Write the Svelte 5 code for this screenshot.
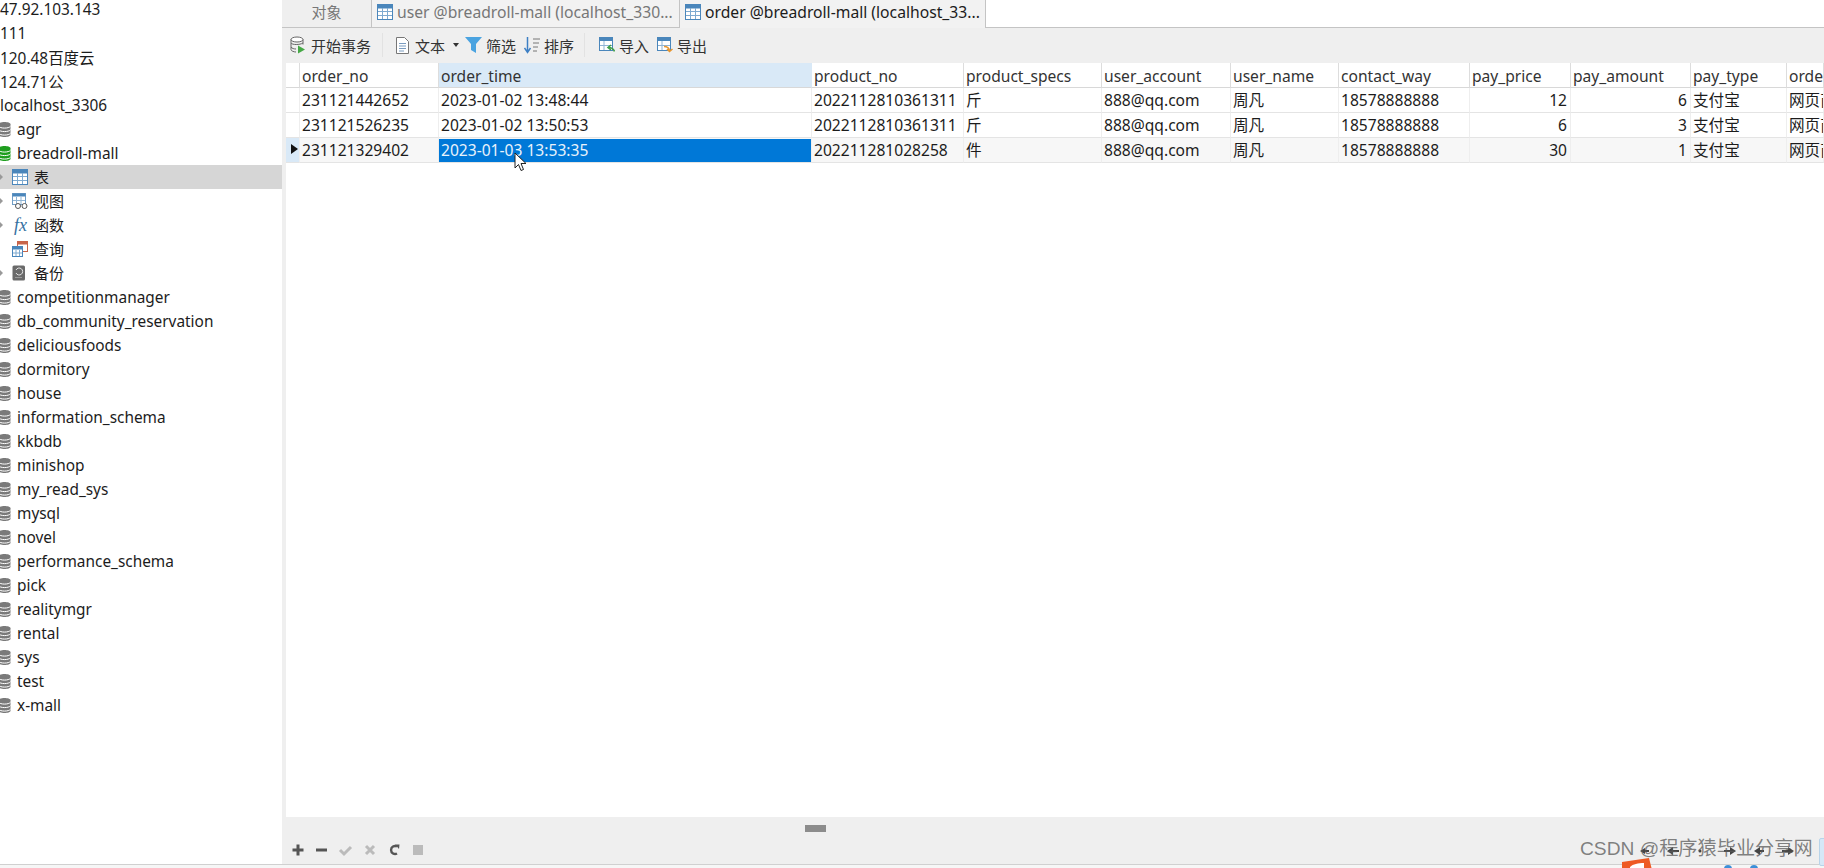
<script lang="ts">
	const connections = ['47.92.103.143', '111', '120.48百度云', '124.71公', 'localhost_3306'];
	const dbsBefore = [{ name: 'agr', open: false }, { name: 'breadroll-mall', open: true }];
	const objects = [
		{ name: '表', icon: 'table', arrow: true, active: true },
		{ name: '视图', icon: 'view', arrow: true, active: false },
		{ name: '函数', icon: 'fx', arrow: true, active: false },
		{ name: '查询', icon: 'query', arrow: false, active: false },
		{ name: '备份', icon: 'backup', arrow: true, active: false }
	];
	const dbsAfter = [
		'competitionmanager', 'db_community_reservation', 'deliciousfoods', 'dormitory', 'house',
		'information_schema', 'kkbdb', 'minishop', 'my_read_sys', 'mysql', 'novel',
		'performance_schema', 'pick', 'realitymgr', 'rental', 'sys', 'test', 'x-mall'
	];

	const columns = ['order_no', 'order_time', 'product_no', 'product_specs', 'user_account', 'user_name', 'contact_way', 'pay_price', 'pay_amount', 'pay_type', 'order_from'];
	const rows = [
		['231121442652', '2023-01-02 13:48:44', '2022112810361311', '斤', '888@qq.com', '周凡', '18578888888', '12', '6', '支付宝', '网页商城'],
		['231121526235', '2023-01-02 13:50:53', '2022112810361311', '斤', '888@qq.com', '周凡', '18578888888', '6', '3', '支付宝', '网页商城'],
		['231121329402', '2023-01-03 13:53:35', '202211281028258', '件', '888@qq.com', '周凡', '18578888888', '30', '1', '支付宝', '网页商城']
	];
	const numeric = [7, 8];
</script>

{#snippet tableIcon()}
	<svg class="ico" width="16" height="16" viewBox="0 0 16 16">
		<rect x="0.5" y="0.5" width="15" height="15" fill="#fff" stroke="#4a86bb" />
		<rect x="0.5" y="0.5" width="15" height="3.5" fill="#4a86bb" stroke="#4a86bb" />
		<path d="M5.5 4v11M10.5 4v11M1 7.5h14M1 11.5h14" stroke="#7eaad0" fill="none" />
	</svg>
{/snippet}

{#snippet dbIcon(green: boolean)}
	<svg class="db" width="11" height="17" viewBox="0 0 11 17">
		<path d="M-1.500 3.200C-1.500 .2 10.500 .2 10.500 3.200V13.800C10.500 16.800 -1.500 16.800 -1.500 13.800Z" fill={green ? '#1f9e1f' : '#7a7a7a'} />
		<path d="M-1.500 5.200C0 7.700 9 7.700 10.500 5.200M-1.500 8.700C0 11.200 9 11.200 10.500 8.700M-1.500 12.200C0 14.700 9 14.700 10.500 12.200" fill="none" stroke="#fff" stroke-width="1" />
	</svg>
{/snippet}

{#snippet objIcon(kind: string)}
	{#if kind === 'table'}
		{@render tableIcon()}
	{:else if kind === 'view'}
		<svg class="ico" width="16" height="16" viewBox="0 0 16 16">
			<rect x="0.500" y="0.500" width="13" height="11" fill="#fff" stroke="#6f9dc6" />
			<rect x="0.500" y="0.500" width="13" height="3" fill="#4a86bb" />
			<path d="M4.500 4v7M9 4v7M1 7.500h12" stroke="#8fb4d4" fill="none" />
			<circle cx="6" cy="13" r="2.500" fill="#fff" stroke="#555" />
			<circle cx="12.500" cy="13" r="2.500" fill="#fff" stroke="#555" />
		</svg>
	{:else if kind === 'fx'}
		<span class="fx">fx</span>
	{:else if kind === 'query'}
		<svg class="ico" width="16" height="16" viewBox="0 0 16 16">
			<rect x="5.500" y="0.500" width="10" height="10" fill="#fff" stroke="#c8654a" />
			<rect x="5.500" y="0.500" width="10" height="3" fill="#c8654a" />
			<rect x="0.500" y="5.500" width="10" height="10" fill="#fff" stroke="#4a86bb" />
			<rect x="0.500" y="5.500" width="10" height="3" fill="#4a86bb" />
			<path d="M4 9v6M7.500 9v6M1 12h9" stroke="#7eaad0" fill="none" />
		</svg>
	{:else}
		<svg class="ico" width="14" height="16" viewBox="0 0 14 16">
			<rect x="0.500" y="0.500" width="12.500" height="15" rx="1.500" fill="#6a6a6a" />
			<path d="M4 5a3.500 3.500 0 1 1 0 3" fill="none" stroke="#e4e4e4" />
			<path d="M3 12.500h7" stroke="#999" />
		</svg>
	{/if}
{/snippet}

<div class="app">
	<div class="workspace">
		<aside class="sidebar">
			{#each connections as c}
				<div class="row conn">{c}</div>
			{/each}
			{#each dbsBefore as d}
				<div class="row">{@render dbIcon(d.open)}<span class="label">{d.name}</span></div>
			{/each}
			{#each objects as o}
				<div class="row obj" class:active={o.active}>
					{#if o.arrow}<span class="arrow"></span>{/if}
					<span class="obj-icon">{@render objIcon(o.icon)}</span>
					<span class="obj-label">{o.name}</span>
				</div>
			{/each}
			{#each dbsAfter as d}
				<div class="row">{@render dbIcon(false)}<span class="label">{d}</span></div>
			{/each}
		</aside>

		<main class="main">
			<div class="tabs">
				<div class="tab objects">对象</div>
				<div class="tab other">{@render tableIcon()}<span>user @breadroll-mall (localhost_330...</span></div>
				<div class="tab current">{@render tableIcon()}<span>order @breadroll-mall (localhost_33...</span></div>
				<div class="tab-rest"></div>
			</div>

			<div class="toolbar">
				<button class="tool first">
					<svg width="16" height="18" viewBox="0 0 16 18">
						<ellipse cx="7" cy="3.500" rx="6" ry="2.500" fill="#fff" stroke="#666" />
						<path d="M1 3.500v10c0 1.500 3 2.500 5 2.500M13 3.500v5M1 7c1 2 9 2 12 0M1 11c1 1.500 3 2 5 2" fill="none" stroke="#666" />
						<path d="M8 9.500l7 4-7 4z" fill="#45a845" />
					</svg>
					开始事务
				</button>
				<span class="sep"></span>
				<button class="tool doc">
					<svg width="13" height="17" viewBox="0 0 13 17">
						<path d="M.5 .5h8l4 4v12h-12z" fill="#fff" stroke="#777" />
						<path d="M3 6.500h7M3 9h7M3 11.500h7M3 14h5" stroke="#7b9cc0" />
					</svg>
					文本
					<span class="caret"></span>
				</button>
				<button class="tool">
					<svg width="17" height="16" viewBox="0 0 17 16">
						<path d="M0 0h17l-6 7v9l-5-3V7z" fill="#4aa3e0" />
					</svg>
					筛选
				</button>
				<button class="tool">
					<svg width="16" height="17" viewBox="0 0 16 17">
						<path d="M3.500 0v14M.5 11l3 4.500 3-4.500" fill="none" stroke="#3d7fc4" stroke-width="1.500" />
						<path d="M9 2h7M9 6h6M9 10h5M9 14h4" stroke="#777" />
					</svg>
					排序
				</button>
				<span class="sep second"></span>
				<button class="tool">
					<svg width="16" height="16" viewBox="0 0 16 16">
						<rect x="0.500" y="0.500" width="13" height="13" fill="#fff" stroke="#4a86bb" />
						<rect x="0.500" y="0.500" width="13" height="3.500" fill="#4a86bb" />
						<path d="M5 4v9M1 8.500h12" stroke="#8fb4d4" />
						<path d="M15.500 14.500c-1-3-3-4-6-4M12 8l-3 2.500 3 2.500" fill="none" stroke="#3f9e4a" stroke-width="1.600" />
					</svg>
					导入
				</button>
				<button class="tool">
					<svg width="16" height="16" viewBox="0 0 16 16">
						<rect x="0.500" y="0.500" width="13" height="13" fill="#fff" stroke="#4a86bb" />
						<rect x="0.500" y="0.500" width="13" height="3.500" fill="#4a86bb" />
						<path d="M5 4v9M1 8.500h12" stroke="#8fb4d4" />
						<path d="M7 9.500c3 0 5 1 5.500 4M10 12l2.500 2.500 3-2.500" fill="none" stroke="#e8962e" stroke-width="1.600" />
					</svg>
					导出
				</button>
			</div>

			<div class="grid-area">
				<div class="grid">
					<div class="cell head indicator"></div>
					{#each columns as col, i}
						<div class="cell head" class:sel={i === 1}>{col}</div>
					{/each}
					{#each rows as row, r}
						<div class="cell indicator" class:current-row={r === 2}>
							{#if r === 2}<span class="pointer"></span>{/if}
						</div>
						{#each row as value, i}
							<div class="cell" class:alt={r === 2} class:num={numeric.includes(i)} class:selected={r === 2 && i === 1}>{value}</div>
						{/each}
					{/each}
				</div>
			</div>

			<div class="footer">
				<div class="grip-row"><span class="grip"></span></div>
				<div class="actions">
					<svg width="160" height="14" viewBox="0 0 160 14">
						<path d="M6 1.500v11M.5 7h11" stroke="#555" stroke-width="3" />
						<path d="M24 7h11" stroke="#555" stroke-width="3" />
						<path d="M48 7l4 4 7-7" fill="none" stroke="#bbb" stroke-width="3" />
						<path d="M74 3l8 8M82 3l-8 8" stroke="#bbb" stroke-width="3" />
						<path d="M105 3.500a4 4 0 1 0 0 7" fill="none" stroke="#555" stroke-width="2.400" />
						<path d="M103 1.500l4.500 0-.5 4.500z" fill="#555" />
						<rect x="121" y="2" width="10" height="10" fill="#bbb" />
					</svg>
				</div>
			</div>
		</main>
	</div>
	<div class="statusbar"></div>

	<!-- things lying over the window -->
	<svg class="cursor" width="14" height="20" viewBox="0 0 14 20">
		<path d="M1 1v15l3.500-3.500 2.500 6 2.500-1-2.500-6h5z" fill="#fff" stroke="#222" />
	</svg>
	<svg class="pager" width="170" height="12" viewBox="0 0 170 12">
		<path d="M0 6l5-3v6zM5 5h4v2H5z" fill="#444" />
		<path d="M27 6l6-4v8zM33 5h6v2h-6z" fill="#444" />
		<circle cx="60" cy="6" r="1.500" fill="#444" />
		<path d="M84 5h6v2h-6zM90 2l6 4-6 4z" fill="#444" />
		<path d="M114 6l6-4v8zM120 5h4v2h-4z" fill="#444" />
		<path d="M142 5h6v2h-6zM148 2l6 4-6 4z" fill="#444" />
	</svg>
	<div class="watermark">CSDN @程序猿毕业分享网</div>
	<svg class="orange" width="30" height="12" viewBox="0 0 30 12">
		<path d="M0 4L27 0l3 12H0z" fill="#ee5a24" />
		<path d="M8 9c3-3 8-4 14-4v7H8z" fill="#fff" />
	</svg>
	<div class="tray"><span></span><span></span></div>
	<div class="blue-edge"></div>
</div>

<style>
	:global(body) {
		margin: 0;
		background: #fff;
	}

	.app {
		position: relative;
		width: 1824px;
		height: 868px;
		overflow: hidden;
		display: flex;
		flex-direction: column;
		font-family: 'Noto Sans', 'Noto Sans CJK SC', sans-serif;
		font-size: 15.4px;
		color: #1c1c1c;
	}

	.workspace {
		display: flex;
		height: 864px;
	}

	.sidebar {
		width: 282px;
		flex: none;
		margin-top: -3px;
		background: #fff;
		overflow: hidden;
	}

	.row {
		display: flex;
		align-items: center;
		height: 24px;
		white-space: nowrap;
		position: relative;
	}

	.conn {
		padding-left: 0;
	}

	.db {
		flex: none;
		margin-right: 6px;
		overflow: hidden;
	}

	.obj {
		padding-left: 12px;
	}

	.obj.active {
		background: #d6d6d6;
	}

	.obj-icon {
		width: 16px;
		height: 16px;
		display: flex;
		align-items: center;
		margin-right: 6px;
	}

	.obj-label {
		font-size: 15px;
		padding-bottom: 2px;
	}

	.ico {
		flex: none;
		display: block;
	}

	.fx {
		font-family: 'Liberation Serif', serif;
		font-style: italic;
		font-size: 18px;
		line-height: 16px;
		color: #35709f;
		margin-left: 2px;
	}

	.arrow {
		position: absolute;
		left: 0;
		top: 9px;
		border-left: 3px solid #999;
		border-top: 3px solid transparent;
		border-bottom: 3px solid transparent;
	}

	.main {
		flex: 1;
		min-width: 0;
		display: flex;
		flex-direction: column;
		background: #efefef;
		padding-left: 1px;
		border-left: 3px solid #efefef;
	}

	.tabs {
		display: flex;
		height: 27px;
		flex: none;
		font-size: 15.7px;
		margin-left: -4px;
		padding-left: 0;
	}

	.tab {
		display: flex;
		align-items: center;
		gap: 4px;
		white-space: nowrap;
		box-sizing: border-box;
		height: 28px;
		padding-bottom: 4px;
		border-bottom: 1px solid #c4c4c4;
	}

	.objects {
		width: 90px;
		justify-content: center;
		color: #777;
		font-size: 15px;
		border-right: 1px solid #c4c4c4;
	}

	.other {
		width: 308px;
		padding-left: 5px;
		color: #777;
		background: #f2f2f2;
		border-right: 1px solid #c4c4c4;
	}

	.current {
		width: 306px;
		padding-left: 5px;
		color: #1c1c1c;
		background: #f2f2f2;
		border-bottom: none;
		border-right: 1px solid #c4c4c4;
	}

	.tab-rest {
		flex: 1;
		height: 28px;
		box-sizing: border-box;
		background: #fff;
		border-bottom: 1px solid #c4c4c4;
	}

	.toolbar {
		flex: none;
		height: 36px;
		display: flex;
		align-items: center;
		padding-left: 4px;
		box-sizing: border-box;
		font-size: 15px;
	}

	.tool {
		display: flex;
		align-items: center;
		gap: 4px;
		border: none;
		background: none;
		padding: 0;
		margin-right: 8px;
		font: inherit;
		color: #333;
		white-space: nowrap;
	}

	.tool.first {
		gap: 5px;
		margin-right: 11px;
	}

	.tool.doc {
		gap: 6px;
		margin-right: 6px;
		margin-left: 1px;
	}

	.sep {
		width: 1px;
		height: 24px;
		background: #e2e2e2;
		margin-right: 12px;
	}

	.sep.second {
		margin-left: 2px;
		margin-right: 14px;
	}

	.caret {
		margin-left: 2px;
		border-top: 4px solid #333;
		border-left: 3px solid transparent;
		border-right: 3px solid transparent;
	}

	.grid-area {
		flex: 1;
		min-height: 0;
		background: #fff;
		overflow: hidden;
	}

	.grid {
		display: grid;
		grid-template-columns: 14px 139px 373px 152px 138px 129px 108px 131px 101px 120px 96px 37px;
		grid-auto-rows: 25px;
		font-size: 15.6px;
	}

	.cell {
		box-sizing: border-box;
		padding: 0 3px 0 2px;
		line-height: 24px;
		white-space: nowrap;
		overflow: hidden;
		border-right: 1px solid #eee;
		border-bottom: 1px solid #e4e4e4;
		color: #1c1c1c;
	}

	.head {
		border-right-color: #ddd;
		border-bottom-color: #d8d8d8;
		color: #333;
		line-height: 26px;
	}

	.head.sel {
		background: #d9e9f7;
		border-right-color: #d9e9f7;
	}

	.num {
		text-align: right;
	}

	.alt {
		background: #f7f7f7;
	}

	.selected {
		background: #0078d7;
		color: #e8f2fb;
		border-top: 1px solid #f7f7f7;
		line-height: 22px;
	}

	.indicator {
		padding: 0;
		position: relative;
	}

	.current-row {
		background: #d9e9f7;
	}

	.pointer {
		position: absolute;
		left: 5px;
		top: 6px;
		border-left: 7px solid #111;
		border-top: 5px solid transparent;
		border-bottom: 5px solid transparent;
	}

	.footer {
		flex: none;
		height: 47px;
		display: flex;
		flex-direction: column;
	}

	.grip-row {
		height: 20px;
		display: flex;
		align-items: center;
		padding-left: 519px;
		flex: none;
	}

	.grip {
		width: 21px;
		height: 7px;
		background: #8c8c8c;
		margin-top: 2px;
	}

	.actions {
		padding: 6px 0 0 6px;
		line-height: 0;
	}

	.statusbar {
		flex: none;
		height: 4px;
		box-sizing: border-box;
		border-top: 1px solid #d0d0d0;
		background: #f6f6f6;
	}

	.cursor {
		position: absolute;
		left: 514px;
		top: 152px;
	}

	.pager {
		position: absolute;
		left: 1640px;
		top: 845px;
	}

	.watermark {
		position: absolute;
		left: 1580px;
		top: 835px;
		font-family: 'Liberation Sans', 'Noto Sans CJK SC', sans-serif;
		font-size: 19.2px;
		line-height: 28px;
		color: rgba(90, 90, 90, 0.75);
		white-space: nowrap;
	}

	.orange {
		position: absolute;
		left: 1622px;
		top: 858px;
	}

	.tray {
		position: absolute;
		left: 1724px;
		top: 865px;
		display: flex;
		gap: 18px;
	}

	.tray span {
		width: 8px;
		height: 8px;
		border-radius: 50%;
		background: #3d8fd8;
	}

	.blue-edge {
		position: absolute;
		left: 1819px;
		top: 838px;
		width: 8px;
		height: 26px;
		background: #d6e8f7;
		border: 1px solid #b8d4ea;
		border-radius: 2px;
	}
</style>
